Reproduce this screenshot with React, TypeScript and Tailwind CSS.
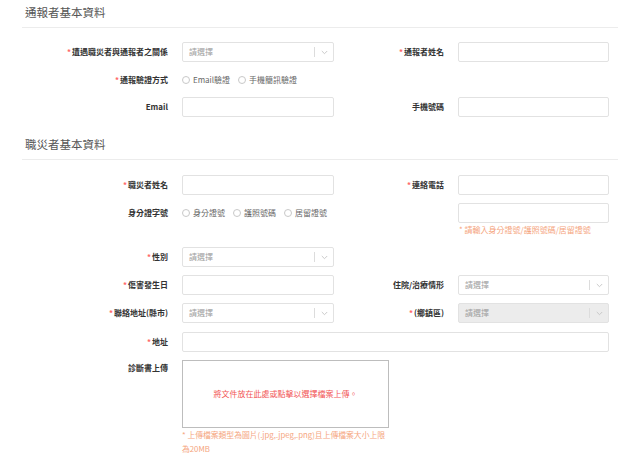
import React from "react";

const Req = () => <span className="text-[#f66] mr-[1px]">*</span>;

const Chevron = () => (
  <svg width="7" height="5" viewBox="0 0 7 5" fill="none">
    <path d="M0.8 1 L3.5 3.7 L6.2 1" stroke="#c4c4c4" strokeWidth="0.9" />
  </svg>
);

const Select = ({ disabled = false }: { disabled?: boolean }) => (
  <div
    className={`w-full h-[20px] border border-[#e2e2e2] rounded-[2px] flex items-center pl-[6px] text-[#a0a0a0] ${
      disabled ? "bg-[#ececec]" : "bg-white"
    }`}
  >
    <span className="flex-1 leading-none">請選擇</span>
    <span className="w-px h-[10px] bg-[#dcdcdc]" />
    <span className="w-[18px] flex justify-center items-center">
      <Chevron />
    </span>
  </div>
);

const Input = () => (
  <div className="w-full h-[20px] border border-[#e2e2e2] rounded-[2px] bg-white" />
);

const Radio = ({ label }: { label: string }) => (
  <span className="flex items-center gap-[3px] text-[#666]">
    <span className="w-[8px] h-[8px] rounded-full border border-[#c8c8c8] bg-white" />
    <span className="leading-none">{label}</span>
  </span>
);

const Label = ({
  children,
  wide = true,
  top = false,
}: {
  children: React.ReactNode;
  wide?: boolean;
  top?: boolean;
}) => (
  <div
    className={`${wide ? "w-[160px]" : "w-[124px]"} shrink-0 pr-[14px] text-right font-semibold text-[#333] leading-none ${
      top ? "self-start pt-[4px]" : ""
    }`}
  >
    {children}
  </div>
);

const Title = ({ children, className = "" }: { children: React.ReactNode; className?: string }) => (
  <div
    className={`h-[28px] border-b border-[#ececec] pl-[3px] pt-[4px] text-[11.5px] leading-[16px] text-[#555] ${className}`}
  >
    {children}
  </div>
);

export default function App() {
  return (
    <div className="w-[640px] h-[459px] overflow-hidden bg-white px-[22px] font-['Noto_Sans_CJK_TC','Noto_Sans',sans-serif] text-[8px]">
      <Title>通報者基本資料</Title>

      <div className="mt-[14px] flex items-center h-[20px]">
        <Label>
          <Req />
          遭遇職災者與通報者之關係
        </Label>
        <div className="w-[152px]">
          <Select />
        </div>
        <Label wide={false}>
          <Req />
          通報者姓名
        </Label>
        <div className="w-[151px]">
          <Input />
        </div>
      </div>

      <div className="mt-[8px] flex items-center h-[20px]">
        <Label>
          <Req />
          通報驗證方式
        </Label>
        <div className="flex items-center gap-[8px]">
          <Radio label="Email驗證" />
          <Radio label="手機簡訊驗證" />
        </div>
      </div>

      <div className="mt-[7px] flex items-center h-[20px]">
        <Label>Email</Label>
        <div className="w-[152px]">
          <Input />
        </div>
        <Label wide={false}>手機號碼</Label>
        <div className="w-[151px]">
          <Input />
        </div>
      </div>

      <Title className="mt-[15px]">職災者基本資料</Title>

      <div className="mt-[15px] flex items-center h-[20px]">
        <Label>
          <Req />
          職災者姓名
        </Label>
        <div className="w-[152px]">
          <Input />
        </div>
        <Label wide={false}>
          <Req />
          連絡電話
        </Label>
        <div className="w-[151px]">
          <Input />
        </div>
      </div>

      <div className="mt-[8px] flex items-start">
        <div className="flex items-center h-[20px]">
          <Label>身分證字號</Label>
          <div className="w-[152px] flex items-center gap-[8px]">
            <Radio label="身分證號" />
            <Radio label="護照號碼" />
            <Radio label="居留證號" />
          </div>
          <div className="w-[124px]" />
        </div>
        <div className="w-[151px]">
          <Input />
          <div className="mt-[1px] leading-[12px] text-[#f5a57e] pl-[1px]">
            * 請輸入身分證號/護照號碼/居留證號
          </div>
        </div>
      </div>

      <div className="mt-[11px] flex items-center h-[20px]">
        <Label>
          <Req />
          性別
        </Label>
        <div className="w-[152px]">
          <Select />
        </div>
      </div>

      <div className="mt-[8px] flex items-center h-[20px]">
        <Label>
          <Req />
          傷害發生日
        </Label>
        <div className="w-[152px]">
          <Input />
        </div>
        <Label wide={false}>住院/治療情形</Label>
        <div className="w-[151px]">
          <Select />
        </div>
      </div>

      <div className="mt-[8px] flex items-center h-[20px]">
        <Label>
          <Req />
          聯絡地址(縣市)
        </Label>
        <div className="w-[152px]">
          <Select />
        </div>
        <Label wide={false}>
          <Req />
          (鄉鎮區)
        </Label>
        <div className="w-[151px]">
          <Select disabled />
        </div>
      </div>

      <div className="mt-[9px] flex items-center h-[20px]">
        <Label>
          <Req />
          地址
        </Label>
        <div className="w-[427px]">
          <Input />
        </div>
      </div>

      <div className="mt-[8px] flex items-start">
        <Label top>診斷書上傳</Label>
        <div className="w-[207px]">
          <div className="h-[68px] border border-[#bdbdbd] flex items-center justify-center text-[#f25656]">
            將文件放在此處或點擊以選擇檔案上傳。
          </div>
          <div className="leading-[14px] text-[7.8px] text-[#f5a57e]">
            * 上傳檔案類型為圖片(.jpg,.jpeg,.png)且上傳檔案大小上限為20MB
          </div>
        </div>
      </div>
    </div>
  );
}
